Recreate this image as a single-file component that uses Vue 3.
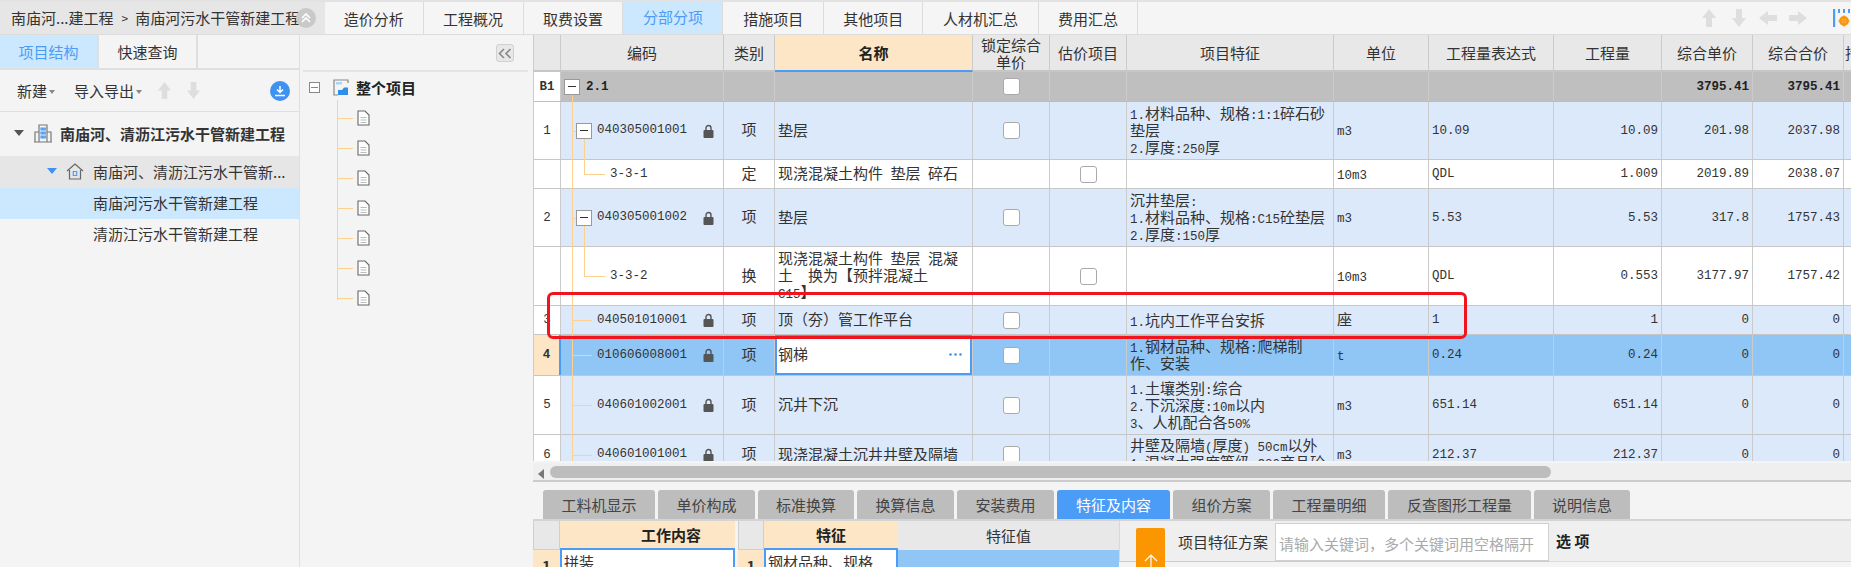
<template>
  <div class="app">
    <!-- top navigation -->
    <div class="topbar">
      <div class="crumb">
        <span>南庙河...建工程</span>
        <span class="crumb-sep">&gt;</span>
        <span>南庙河污水干管新建工程</span>
        <span class="crumb-fold">
          <svg width="18" height="18" viewBox="0 0 18 18" fill="none" stroke="#fff" stroke-width="1.6">
            <path d="M5 9l4-4 4 4M5 13l4-4 4 4" />
          </svg>
        </span>
      </div>
      <div
        v-for="tab in topTabs"
        :key="tab.label"
        class="top-tab"
        :class="{ active: tab.active }"
        :style="{ width: tab.width + 'px' }"
      >
        {{ tab.label }}
      </div>
      <div class="top-tools">
        <svg class="tool" width="16" height="20" viewBox="0 0 16 20"><path d="M8 1l7 9h-4v9H5v-9H1z" /></svg>
        <svg class="tool t-down" width="16" height="20" viewBox="0 0 16 20"><path d="M8 19l7-9h-4V1H5v9H1z" /></svg>
        <svg class="tool t-left" width="20" height="16" viewBox="0 0 20 16"><path d="M1 8l9-7v4h9v6h-9v4z" /></svg>
        <svg class="tool t-right" width="20" height="16" viewBox="0 0 20 16"><path d="M19 8l-9-7v4H1v6h9v4z" /></svg>
        <svg class="gear" width="18" height="20" viewBox="0 0 18 20">
          <path d="M1 1v18" stroke="#4a9cf7" stroke-width="2.4" />
          <path d="M6 1v4M11 1v4M16 1v4" stroke="#4a9cf7" stroke-width="2" />
          <circle cx="11" cy="13" r="3.4" fill="none" stroke="#f9960e" stroke-width="3" />
          <path d="M11 7.5v11M5.5 13h11" stroke="#f9960e" stroke-width="1.6" />
        </svg>
      </div>
    </div>

    <div class="workspace">
      <!-- project tree -->
      <aside class="left">
        <div class="left-tabs">
          <div class="left-tab active">项目结构</div>
          <div class="left-tab">快速查询</div>
          <div class="left-tab"></div>
        </div>
        <div class="left-tools">
          <span class="tool-text">新建<i class="caret"></i></span>
          <span class="tool-text">导入导出<i class="caret"></i></span>
          <svg class="tool" width="15" height="19" viewBox="0 0 16 20"><path d="M8 1l7 9h-4v9H5v-9H1z" /></svg>
          <svg class="tool" width="15" height="19" viewBox="0 0 16 20"><path d="M8 19l7-9h-4V1H5v9H1z" /></svg>
          <span class="spacer"></span>
          <span class="down-circle">
            <svg width="12" height="12" viewBox="0 0 12 12" fill="none" stroke="#fff" stroke-width="1.5">
              <path d="M6 1v6M3 4.5L6 7.5l3-3M1 10.5h10" />
            </svg>
          </span>
        </div>
        <div class="proj-row root">
          <i class="tri dark"></i>
          <svg width="20" height="20" viewBox="0 0 20 20" fill="none" stroke="#777" stroke-width="1.2">
            <path d="M1 19h18M2 19V9h4M18 19V9h-4M6 19V2h8v17" />
            <path d="M8 5h1.5v2H8zM10.8 5h1.5v2h-1.5zM8 9h1.5v2H8zM10.8 9h1.5v2h-1.5zM8 13h1.5v2H8zM10.8 13h1.5v2h-1.5z" stroke="#4a9cf7" />
          </svg>
          <span>南庙河、清沥江污水干管新建工程</span>
        </div>
        <div class="proj-row sub">
          <i class="tri blue"></i>
          <svg width="18" height="18" viewBox="0 0 18 18" fill="none" stroke="#666" stroke-width="1.2">
            <path d="M1 9l8-7 8 7M3.5 8v9h11V8" />
            <path d="M7.3 9.5h3.4v4H7.3z" stroke="#4a9cf7" />
          </svg>
          <span>南庙河、清沥江污水干管新...</span>
        </div>
        <div class="proj-row leaf selected">南庙河污水干管新建工程</div>
        <div class="proj-row leaf">清沥江污水干管新建工程</div>
      </aside>

      <!-- division tree -->
      <section class="mid">
        <div class="mid-head">
          <span class="fold-btn">
            <svg width="14" height="11" viewBox="0 0 14 11" fill="none" stroke="#888" stroke-width="1.6">
              <path d="M6 1L1.5 5.5 6 10M12.5 1L8 5.5l4.5 4.5" />
            </svg>
          </span>
        </div>
        <div class="mid-root">
          <span class="mini-box"><i></i></span>
          <svg width="16" height="17" viewBox="0 0 16 17" fill="none">
            <path d="M15 4V1H1v15h4" stroke="#888" stroke-width="1.2" />
            <path d="M3 3h6v2.5H3z" fill="#a9d3f8" />
            <path d="M5 16v-5h4l2-2.5h4V16z" fill="#2f8fe8" />
          </svg>
          <span class="mid-title">整个项目</span>
        </div>
        <div class="doc-list">
          <div v-for="n in 7" :key="n" class="doc-row">
            <i class="doc-line"></i>
            <svg width="13" height="16" viewBox="0 0 13 16" fill="#fff" stroke="#666" stroke-width="1.1">
              <path d="M1 1h7l4 4v10H1z" />
              <path d="M3.5 7.5h6M3.5 10h6M3.5 12.5h6" stroke="#bbb" />
            </svg>
          </div>
        </div>
      </section>

      <!-- main grid -->
      <main class="main">
        <div class="grid-row grid-head">
          <div class="cell"></div>
          <div class="cell">编码</div>
          <div class="cell">类别</div>
          <div class="cell cur">名称</div>
          <div class="cell tight">锁定综合<br />单价</div>
          <div class="cell">估价项目</div>
          <div class="cell">项目特征</div>
          <div class="cell">单位</div>
          <div class="cell">工程量表达式</div>
          <div class="cell">工程量</div>
          <div class="cell">综合单价</div>
          <div class="cell">综合合价</div>
          <div class="cell clip">措施</div>
        </div>

        <div class="grid-body">
          <div
            v-for="row in rows"
            :key="row.id"
            class="grid-row"
            :class="row.tone"
            :style="{ height: row.h + 'px' }"
          >
            <div class="cell no" :class="{ marked: row.tone === 'picked' }">
              <span class="lat">{{ row.no }}</span>
            </div>

            <div class="cell code">
              <i v-if="row.kind === 'group'" class="v-line outer from-box"></i>
              <i v-else class="v-line outer"></i>
              <template v-if="row.kind === 'group'">
                <span class="box group-box"><i></i></span>
                <span class="lat group-name">2.1</span>
              </template>
              <template v-if="row.kind === 'parent'">
                <i class="h-line stub"></i>
                <span class="box"><i></i></span>
                <i class="v-line inner half-down"></i>
              </template>
              <template v-if="row.kind === 'child'">
                <i class="v-line inner half-up"></i>
                <i class="h-line to-child"></i>
              </template>
              <i v-if="row.kind === 'plain'" class="h-line long"></i>
              <span v-if="row.code" class="lat code-text" :class="{ sub: row.kind === 'child' }">{{ row.code }}</span>
              <svg v-if="row.lock" class="lock" width="11" height="14" viewBox="0 0 11 14">
                <path d="M3 6V4a2.5 2.5 0 015 0v2" fill="none" stroke="#555" stroke-width="1.4" />
                <rect x="0.5" y="6" width="10" height="8" rx="1" fill="#555" />
              </svg>
            </div>

            <div class="cell center cat">{{ row.cat }}</div>

            <div class="cell text name" :class="{ editing: row.tone === 'picked' }">
              <div v-for="(line, i) in row.name" :key="i" class="line">
                <span v-for="(run, j) in runs(line)" :key="j" :class="{ lat: run.latin }">{{ run.text }}</span>
              </div>
              <svg v-if="row.tone === 'picked'" class="more" width="13" height="3" viewBox="0 0 13 3" fill="#3e92f2">
                <circle cx="1.5" cy="1.5" r="1.3" />
                <circle cx="6.5" cy="1.5" r="1.3" />
                <circle cx="11.5" cy="1.5" r="1.3" />
              </svg>
            </div>

            <div class="cell center"><span v-if="row.check === 'lock'" class="check"></span></div>
            <div class="cell center"><span v-if="row.check === 'est'" class="check"></span></div>

            <div class="cell text feat" :class="{ top: row.id === 'r6' }">
              <div v-for="(line, i) in row.feat" :key="i" class="line">
                <span v-for="(run, j) in runs(line)" :key="j" :class="{ lat: run.latin }">{{ run.text }}</span>
              </div>
            </div>

            <div class="cell text unit">
              <div class="line">
                <span v-for="(run, j) in runs(row.unit)" :key="j" :class="{ lat: run.latin }">{{ run.text }}</span>
              </div>
            </div>
            <div class="cell text expr"><span class="lat">{{ row.expr }}</span></div>
            <div class="cell num"><span class="lat">{{ row.qty }}</span></div>
            <div class="cell num"><span class="lat" :class="{ strong: row.kind === 'group' }">{{ row.price }}</span></div>
            <div class="cell num"><span class="lat" :class="{ strong: row.kind === 'group' }">{{ row.total }}</span></div>
            <div class="cell"></div>
          </div>
        </div>

        <div class="scroll">
          <i class="scroll-arrow"></i>
          <div class="scroll-thumb"></div>
        </div>

        <div class="sub-tabs">
          <div
            v-for="tab in subTabs"
            :key="tab.label"
            class="sub-tab"
            :class="{ active: tab.active }"
            :style="{ width: tab.width + 'px' }"
          >
            {{ tab.label }}
          </div>
        </div>

        <div class="detail">
          <div class="mini-grid first">
            <div class="mini-no head"></div>
            <div class="mini-title work">工作内容</div>
            <div class="mini-no pick">1</div>
            <div class="mini-value">拼装</div>
          </div>
          <div class="mini-grid second">
            <div class="mini-no head"></div>
            <div class="mini-title">特征</div>
            <div class="mini-title plain">特征值</div>
            <div class="mini-no pick">1</div>
            <div class="mini-value">钢材品种、规格</div>
            <div class="mini-fill"></div>
          </div>
          <div class="scheme">
            <div class="up-btn">
              <svg width="14" height="14" viewBox="0 0 14 14" fill="none" stroke="#fff" stroke-width="1.2">
                <path d="M1 7l6-6 6 6M7 1v13" />
              </svg>
            </div>
            <span class="scheme-label">项目特征方案</span>
            <input class="scheme-input" type="text" placeholder="请输入关键词，多个关键词用空格隔开" />
          </div>
          <div class="options">选 项</div>
        </div>

        <!-- annotation drawn on top of the screenshot -->
        <div class="red-mark"></div>
      </main>
    </div>
  </div>
</template>

<script setup>
const topTabs = [
  { label: "造价分析", width: 99 },
  { label: "工程概况", width: 100 },
  { label: "取费设置", width: 100 },
  { label: "分部分项", width: 100, active: true },
  { label: "措施项目", width: 101 },
  { label: "其他项目", width: 99 },
  { label: "人材机汇总", width: 116 },
  { label: "费用汇总", width: 99 }
];

const subTabs = [
  { label: "工料机显示", width: 112 },
  { label: "单价构成", width: 97 },
  { label: "标准换算", width: 96 },
  { label: "换算信息", width: 97 },
  { label: "安装费用", width: 97 },
  { label: "特征及内容", width: 113, active: true },
  { label: "组价方案", width: 97 },
  { label: "工程量明细", width: 112 },
  { label: "反查图形工程量", width: 143 },
  { label: "说明信息", width: 96 }
];

const rows = [
  { id: "b1", no: "B1", h: 30, tone: "group", kind: "group", check: "lock", name: [], feat: [], unit: "", price: "3795.41", total: "3795.41" },
  {
    id: "r1", no: "1", h: 58, tone: "blue", kind: "parent", code: "040305001001", lock: true, cat: "项", check: "lock",
    name: ["垫层"], feat: ["1.材料品种、规格:1:1碎石砂", "垫层", "2.厚度:250厚"],
    unit: "m3", expr: "10.09", qty: "10.09", price: "201.98", total: "2037.98"
  },
  {
    id: "c1", no: "", h: 29, tone: "white", kind: "child", code: "3-3-1", cat: "定", check: "est",
    name: ["现浇混凝土构件 垫层 碎石"], feat: [],
    unit: "10m3", expr: "QDL", qty: "1.009", price: "2019.89", total: "2038.07"
  },
  {
    id: "r2", no: "2", h: 58, tone: "blue", kind: "parent", code: "040305001002", lock: true, cat: "项", check: "lock",
    name: ["垫层"], feat: ["沉井垫层:", "1.材料品种、规格:C15砼垫层", "2.厚度:150厚"],
    unit: "m3", expr: "5.53", qty: "5.53", price: "317.8", total: "1757.43"
  },
  {
    id: "c2", no: "", h: 59, tone: "white", kind: "child", code: "3-3-2", cat: "换", check: "est",
    name: ["现浇混凝土构件 垫层 混凝", "土  换为【预拌混凝土", "C15】"], feat: [],
    unit: "10m3", expr: "QDL", qty: "0.553", price: "3177.97", total: "1757.42"
  },
  {
    id: "r3", no: "3", h: 29, tone: "blue", kind: "plain", code: "040501010001", lock: true, cat: "项", check: "lock",
    name: ["顶（夯）管工作平台"], feat: ["1.坑内工作平台安拆"],
    unit: "座", expr: "1", qty: "1", price: "0", total: "0"
  },
  {
    id: "r4", no: "4", h: 41, tone: "picked", kind: "plain", code: "010606008001", lock: true, cat: "项", check: "lock",
    name: ["钢梯"], feat: ["1.钢材品种、规格:爬梯制", "作、安装"],
    unit: "t", expr: "0.24", qty: "0.24", price: "0", total: "0"
  },
  {
    id: "r5", no: "5", h: 59, tone: "blue", kind: "plain", code: "040601002001", lock: true, cat: "项", check: "lock",
    name: ["沉井下沉"], feat: ["1.土壤类别:综合", "2.下沉深度:10m以内", "3、人机配合各50%"],
    unit: "m3", expr: "651.14", qty: "651.14", price: "0", total: "0"
  },
  {
    id: "r6", no: "6", h: 40, tone: "blue", kind: "plain", code: "040601001001", lock: true, cat: "项", check: "lock",
    name: ["现浇混凝土沉井井壁及隔墙"], feat: ["井壁及隔墙(厚度) 50cm以外", "1.混凝土强度等级:C30商品砼"],
    unit: "m3", expr: "212.37", qty: "212.37", price: "0", total: "0"
  }
];

// latin runs get a narrower mono font so they sit at half the width of the hanzi
const runs = (text) =>
  (text.match(/[\x00-\x7f]+|[^\x00-\x7f]+/g) || []).map((part) => ({
    text: part,
    latin: /^[\x00-\x7f]/.test(part)
  }));
</script>

<style scoped>
.app {
  width: 1851px;
  height: 567px;
  overflow: hidden;
  background: #f4f4f4;
  color: #333;
  font-family: "Noto Sans CJK SC", "Noto Sans", sans-serif;
  font-size: 15px;
}

i {
  display: block;
  font-style: normal;
}

.lat {
  font-family: "Liberation Mono", monospace;
  font-size: 12.5px;
}

.tool {
  fill: #dedede;
}

/* top bar */
.topbar {
  display: flex;
  height: 35px;
  border-top: 2px solid #e2e2e2;
  border-bottom: 1px solid #dcdcdc;
  box-sizing: border-box;
  background: #f5f5f5;
}

.crumb {
  position: relative;
  display: flex;
  align-items: center;
  gap: 8px;
  width: 325px;
  padding: 0 0 2px 11px;
  box-sizing: border-box;
  background: #e6e6e6;
  white-space: nowrap;
}

.crumb-sep {
  font-size: 12px;
  margin: 0 -1px 0 0;
}

.crumb-fold {
  position: absolute;
  left: 296px;
  top: 6px;
  width: 20px;
  height: 20px;
  border-radius: 50%;
  background: #c9c9c9;
  display: flex;
  align-items: center;
  justify-content: center;
}

.top-tab {
  display: flex;
  align-items: center;
  justify-content: center;
  border-right: 1px solid #dcdcdc;
  box-sizing: border-box;
  padding-top: 1px;
}

.top-tab.active {
  background: #cce8ff;
  color: #4a9cf7;
  padding-top: 0;
  padding-bottom: 3px;
}

.top-tools {
  flex: 1;
  display: flex;
  align-items: center;
  padding-left: 563px;
  gap: 12px;
}

.t-down {
  margin-left: 2px;
}

.t-left {
  margin-left: -1px;
}

.t-right {
  margin-left: -2px;
}

.gear {
  margin-left: 13px;
}

.workspace {
  display: flex;
  height: 532px;
}

/* left panel */
.left {
  width: 300px;
  flex: none;
  border-right: 1px solid #dfdfdf;
  box-sizing: border-box;
}

.left-tabs {
  display: flex;
  height: 35px;
  border-bottom: 2px solid #dfdfdf;
  box-sizing: border-box;
}

.left-tab {
  width: 99px;
  border-right: 2px solid #dfdfdf;
  box-sizing: border-box;
  display: flex;
  align-items: center;
  justify-content: center;
}

.left-tab:last-child {
  border-right: none;
}

.left-tab.active {
  background: #cce8ff;
  color: #4a9cf7;
}

.left-tools {
  display: flex;
  align-items: center;
  height: 41px;
  padding: 0 9px 0 17px;
  border-bottom: 1px solid #dfdfdf;
}

.tool-text {
  display: flex;
  align-items: center;
  margin-right: 19px;
}

.caret {
  width: 0;
  height: 0;
  margin-left: 2px;
  margin-top: 2px;
  border: 3px solid transparent;
  border-top: 4px solid #888;
  border-bottom: none;
}

.left-tools .tool {
  margin-right: 18px;
  margin-left: -4px;
}

.spacer {
  flex: 1;
}

.down-circle {
  width: 20px;
  height: 20px;
  border-radius: 50%;
  background: #3e92f2;
  display: flex;
  align-items: center;
  justify-content: center;
}

.proj-row {
  display: flex;
  align-items: center;
  white-space: nowrap;
  box-sizing: border-box;
  padding-bottom: 2px;
}

.proj-row.root {
  height: 44px;
  padding-left: 14px;
  font-weight: 700;
  gap: 7px;
}

.proj-row.root .tri {
  margin-right: 2px;
}

.proj-row.sub {
  height: 32px;
  background: #e6e6e6;
  padding-left: 47px;
  gap: 9px;
}

.proj-row.leaf {
  height: 31px;
  padding-left: 93px;
}

.proj-row.selected {
  background: #cce8ff;
}

.tri {
  width: 0;
  height: 0;
  border: 5px solid transparent;
  border-bottom: none;
  border-top-width: 6px;
}

.tri.dark {
  border-top-color: #555;
}

.tri.blue {
  border-top-color: #3e92f2;
}

/* middle panel */
.mid {
  width: 233px;
  flex: none;
  padding: 0 5px 0 3px;
  box-sizing: border-box;
}

.mid-head {
  display: flex;
  justify-content: flex-end;
  align-items: flex-start;
  height: 37px;
  padding: 9px 14px 0 0;
  border-bottom: 2px solid #e4e4e4;
  box-sizing: border-box;
}

.fold-btn {
  width: 18px;
  height: 18px;
  border: 1px solid #d0d0d0;
  border-radius: 3px;
  background: #e8e8e8;
  box-sizing: border-box;
  display: flex;
  align-items: center;
  justify-content: center;
}

.mid-root {
  display: flex;
  align-items: center;
  height: 30px;
  padding-left: 6px;
}

.mini-box {
  width: 11px;
  height: 11px;
  border: 1px solid #888;
  box-sizing: border-box;
  margin-right: 13px;
  display: flex;
  align-items: center;
  justify-content: center;
  background: #fff;
}

.mini-box i {
  width: 7px;
  height: 1px;
  background: #26a6e8;
}

.mid-title {
  margin-left: 7px;
  font-weight: 700;
  color: #222;
}

.doc-list {
  margin-left: 34px;
  padding-top: 3px;
  border-left: 1px solid #fcd08f;
  height: 197px;
  margin-top: -2px;
}

.doc-row {
  display: flex;
  align-items: center;
  height: 30px;
}

.doc-line {
  width: 15px;
  height: 1px;
  background: #fcd08f;
  margin-right: 4px;
}

/* main grid */
.main {
  position: relative;
  flex: 1;
  min-width: 0;
}

.grid-row {
  display: grid;
  grid-template-columns: 27px 163px 51px 198px 77px 77px 207px 95px 125px 108px 91px 91px 8px;
  box-sizing: border-box;
  border-bottom: 1px solid #c6c6c6;
}

.grid-head {
  height: 37px;
  background: #e8e8e8;
  border-bottom: 2px solid #c6c6c6;
  border-left: 1px solid #ccc;
}

.grid-head .cell {
  justify-content: center;
  align-items: center;
  text-align: center;
  white-space: nowrap;
  overflow: hidden;
}

.grid-head .tight {
  line-height: 17px;
}

.grid-head .clip {
  justify-content: flex-start;
  padding-left: 1px;
}

.grid-head .cur {
  background: #fde6c6;
  border-bottom: 2px solid #4a9cf7;
  margin-bottom: -2px;
  font-weight: 700;
  color: #222;
}

.cell {
  display: flex;
  align-items: center;
  position: relative;
  min-width: 0;
  border-right: 1px solid #cbcbcb;
  box-sizing: border-box;
}

.grid-body {
  height: 389px;
  overflow: hidden;
  background: #fff;
  border-left: 1px solid #ccc;
}

.grid-row.group {
  background: #bfbfbf;
  border-bottom-color: #bdbdbd;
}

.grid-row.blue {
  background: #dce9fb;
}

.grid-row.white {
  background: #fff;
}

.grid-row.picked {
  background: #90c6f5;
}

.no {
  background: #fff;
  justify-content: center;
}

.no.marked {
  background: #fde6c6;
  font-weight: 700;
  border-right: 2px solid #4a9cf7;
}

.group .no {
  font-weight: 700;
}

.center {
  justify-content: center;
}

.cat {
  padding-bottom: 4px;
}

.text {
  padding: 0 3px;
  align-self: stretch;
  overflow: hidden;
}

.name,
.feat {
  flex-direction: column;
  justify-content: center;
  align-items: flex-start;
}

.name {
  padding-bottom: 3px;
}

.feat {
  padding-bottom: 2px;
}

.feat.top {
  justify-content: flex-start;
  padding-top: 1px;
}

.unit {
  padding-bottom: 4px;
}

.line {
  height: 17px;
  line-height: 17px;
  white-space: pre;
}

.num {
  justify-content: flex-end;
  padding-right: 3px;
}

.strong {
  font-weight: 700;
  color: #222;
}

.editing {
  background: #fff;
  box-shadow: inset 0 0 0 2px #4a9cf7;
}

.more {
  position: absolute;
  right: 10px;
  top: 50%;
  margin-top: -2px;
}

.check {
  width: 17px;
  height: 17px;
  background: #fff;
  border: 1px solid #aaa;
  border-radius: 3px;
  box-sizing: border-box;
}

/* tree lines in the code column */
.v-line {
  position: absolute;
  width: 1px;
  background: #fcd08f;
}

.v-line.outer {
  left: 11px;
  top: 0;
  bottom: -1px;
}

.v-line.outer.from-box {
  top: 22px;
}

.v-line.inner {
  left: 23px;
}

.half-down {
  top: 50%;
  bottom: -1px;
}

.half-up {
  top: 0;
  bottom: 50%;
}

.h-line {
  position: absolute;
  height: 1px;
  top: 50%;
  background: #fcd08f;
}

.h-line.stub {
  left: 11px;
  width: 5px;
}

.h-line.to-child {
  left: 23px;
  width: 21px;
}

.h-line.long {
  left: 11px;
  width: 20px;
}

.box {
  position: absolute;
  left: 15px;
  top: 50%;
  width: 16px;
  height: 16px;
  margin-top: -8px;
  background: #fff;
  border: 1px solid #999;
  box-sizing: border-box;
  display: flex;
  align-items: center;
  justify-content: center;
  z-index: 1;
}

.box i {
  width: 8px;
  height: 1px;
  background: #333;
}

.group-box {
  left: 3px;
}

.group-name {
  position: absolute;
  left: 25px;
  font-weight: 700;
  color: #222;
}

.code-text {
  position: absolute;
  left: 36px;
  margin-top: -1px;
}

.code-text.sub {
  left: 49px;
}

.lock {
  position: absolute;
  left: 142px;
  top: 50%;
  margin-top: -7px;
}

/* scrollbar */
.scroll {
  position: relative;
  height: 19px;
  margin-top: 2px;
  padding: 3px 0 0 17px;
  border-bottom: 2px solid #ccc;
  background: #efefef;
  box-sizing: border-box;
}

.scroll-arrow {
  position: absolute;
  left: 5px;
  top: 6px;
  width: 0;
  height: 0;
  border: 5px solid transparent;
  border-right: 6px solid #777;
  border-left: none;
}

.scroll-thumb {
  width: 1001px;
  height: 12px;
  border-radius: 6px;
  background: #bdbdbd;
}

.sub-tabs {
  display: flex;
  gap: 3px;
  height: 39px;
  padding: 8px 0 0 10px;
  box-sizing: border-box;
  border-bottom: 2px solid #d4d4d4;
}

.sub-tab {
  display: flex;
  align-items: center;
  justify-content: center;
  background: #bdbdbd;
  border-radius: 3px 3px 0 0;
  color: #444;
}

.sub-tab.active {
  background: #4a9cf7;
  color: #fff;
}

/* lower detail area */
.detail {
  display: flex;
  height: 46px;
  overflow: hidden;
}

.mini-grid {
  display: grid;
  grid-template-rows: 29px 30px;
  flex: none;
}

.mini-grid.first {
  width: 202px;
  grid-template-columns: 27px 175px;
}

.mini-grid.second {
  width: 381px;
  margin-left: 3px;
  grid-template-columns: 26px 134px 221px;
}

.mini-no {
  display: flex;
  align-items: center;
  justify-content: center;
  font-weight: 700;
  border: 1px solid #cfcfcf;
  border-top: none;
  box-sizing: border-box;
}

.mini-no.head {
  background: #e8e8e8;
}

.mini-no.pick {
  background: #fde6c6;
  border: none;
}

.mini-title {
  display: flex;
  align-items: center;
  justify-content: center;
  background: #fde6c6;
  border-bottom: 2px solid #4a9cf7;
  box-sizing: border-box;
  font-weight: 700;
  color: #222;
}

.mini-title.work {
  justify-content: flex-start;
  padding-left: 81px;
}

.mini-title.plain {
  background: #e8e8e8;
  border-bottom: none;
  font-weight: 400;
  color: #333;
}

.mini-value {
  background: #fff;
  border: 2px solid #4a9cf7;
  border-top: none;
  padding: 0 2px;
  line-height: 24px;
  white-space: nowrap;
  overflow: hidden;
}

.mini-fill {
  background: #90c6f5;
}

.scheme {
  display: flex;
  flex: none;
  width: 430px;
  height: 41px;
  align-items: center;
  padding-left: 16px;
  box-sizing: border-box;
  background: #efefef;
  border-left: 1px solid #d8d8d8;
  border-bottom: 1px solid #ccc;
}

.up-btn {
  align-self: flex-start;
  margin-top: 7px;
  width: 29px;
  height: 60px;
  flex: none;
  background: #fb9500;
  border-radius: 2px 2px 0 0;
  display: flex;
  justify-content: center;
  padding-top: 26px;
  box-sizing: border-box;
}

.scheme-label {
  margin-left: 13px;
  white-space: nowrap;
}

.scheme-input {
  width: 274px;
  height: 38px;
  margin-left: 7px;
  margin-top: 2px;
  padding: 2px 3px 0;
  border: 1px solid #d0d0d0;
  box-sizing: border-box;
  font: inherit;
  background: #fff;
}

.scheme-input::placeholder {
  color: #aaa;
}

.options {
  flex: 1;
  height: 40px;
  line-height: 40px;
  padding-left: 7px;
  background: #efefef;
  border-bottom: 1px solid #ddd;
  font-weight: 700;
  color: #222;
}

/* red annotation rectangle */
.red-mark {
  position: absolute;
  left: 14px;
  top: 257px;
  width: 920px;
  height: 47px;
  border: 3px solid #f0141e;
  border-radius: 6px;
  box-sizing: border-box;
}
</style>

<style>
body {
  margin: 0;
  overflow: hidden;
}
</style>
